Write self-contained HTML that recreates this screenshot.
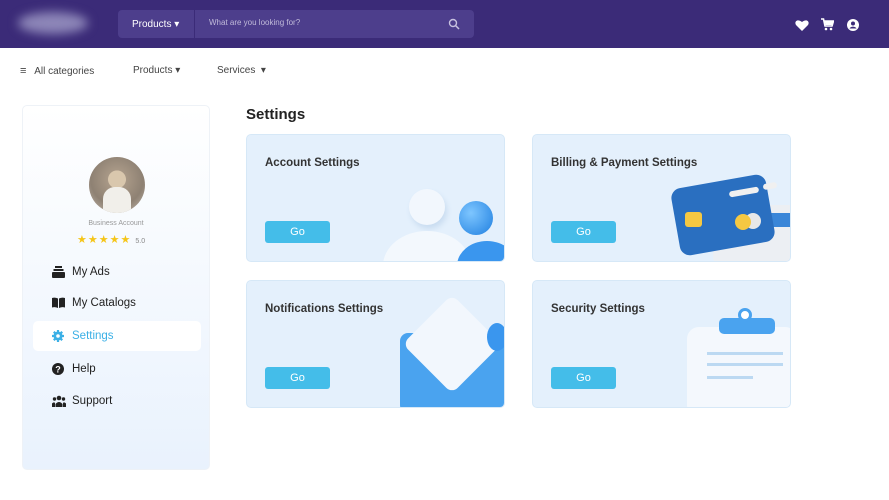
<!DOCTYPE html>
<html><head><style>
*{box-sizing:border-box;margin:0;padding:0}
body{width:889px;height:500px;overflow:hidden;background:#fff;font-family:"Liberation Sans",sans-serif;position:relative;color:#222}
.hdr{position:absolute;left:0;top:0;width:889px;height:48px;background:#3b2b78}
.logo{position:absolute;left:18px;top:12px;width:70px;height:22px;border-radius:50%;background:#8d86b8;filter:blur(5px)}
.search{position:absolute;left:118px;top:10px;width:356px;height:28px;background:#4d3e8c;border-radius:4px}
.search .p{position:absolute;left:14px;top:9px;font-size:10px;color:#fff}
.search .sep{position:absolute;left:76px;top:0;width:1px;height:28px;background:#3b2b78}
.search .q{position:absolute;left:91px;top:8px;font-size:8px;color:#c0bad9}
.nav{position:absolute;top:65px;font-size:10px;color:#444}
.side{position:absolute;left:22px;top:105px;width:188px;height:365px;border:1px solid #eef2f7;border-radius:5px;background:linear-gradient(#fff,#e9f2fd)}
.av{position:absolute;left:66px;top:51px;width:56px;height:56px;border-radius:50%;background:radial-gradient(circle at 50% 40%,#d9c7ad 0 20%,#a89886 21%,#8e8173 60%,#c8beb2 100%);overflow:hidden}
.av:after{content:"";position:absolute;left:14px;top:30px;width:28px;height:26px;border-radius:12px 12px 0 0;background:#f1efea}
.item{position:absolute;left:10px;width:168px;height:30px;font-size:11.5px;color:#222}
.item span{position:absolute;left:39px;top:9px}
.item svg{position:absolute;left:19px;top:9px}
.card{position:absolute;width:259px;height:128px;border:1px solid #d6e8f7;border-radius:5px;background:#e4f0fc;overflow:hidden}
.card h3{position:absolute;left:18px;top:22px;font-size:11.5px;font-weight:bold;color:#333}
.go{position:absolute;left:18px;top:86px;width:65px;height:22px;background:#44bde9;border-radius:3px;color:#fff;font-size:11px;text-align:center;line-height:22px}
</style></head><body>
<div class="hdr">
<div class="logo"></div>
<div class="search"><div class="p">Products ▾</div><div class="sep"></div><div class="q">What are you looking for?</div>
<svg style="position:absolute;left:330px;top:8px" width="12" height="12" viewBox="0 0 12 12"><circle cx="5" cy="5" r="3.5" fill="none" stroke="#c8c2e0" stroke-width="1.4"/><path d="M7.5 7.5L11 11" stroke="#c8c2e0" stroke-width="1.5"/></svg></div>
<svg style="position:absolute;left:795px;top:19px" width="14" height="12" viewBox="0 0 14 12"><path d="M7 12L1 6C-1 3 2-1 7 3C12-1 15 3 13 6Z" fill="#fff"/></svg>
<svg style="position:absolute;left:821px;top:18px" width="13" height="13" viewBox="0 0 13 13"><path d="M0 1H2.5L4 8H11L12.5 3H3" fill="none" stroke="#fff" stroke-width="1.6"/><circle cx="5" cy="11" r="1.3" fill="#fff"/><circle cx="10" cy="11" r="1.3" fill="#fff"/><path d="M3.5 3H12L11 7H4.5Z" fill="#fff"/></svg>
<svg style="position:absolute;left:847px;top:19px" width="12" height="12" viewBox="0 0 12 12"><circle cx="6" cy="6" r="6" fill="#fff"/><circle cx="6" cy="4.5" r="2" fill="#3b2b78"/><path d="M2.5 9.5C4 7 8 7 9.5 9.5" fill="#3b2b78"/></svg>
</div>
<div class="nav" style="left:20px"><span style="font-size:11px">≡</span>&nbsp;&nbsp; All categories</div>
<div class="nav" style="left:133px">Products ▾</div>
<div class="nav" style="left:217px">Services &nbsp;▾</div>
<div class="side">
<div class="av"></div>
<div style="position:absolute;left:0;width:186px;top:114px;text-align:center;font-size:7px;color:#999">Business Account</div>
<div style="position:absolute;left:54px;top:127px;font-size:11px;color:#f5c518;letter-spacing:1px">★★★★★ <span style="color:#888;font-size:7px;letter-spacing:0">5.0</span></div>
<div class="item" style="top:151px"><svg width="13" height="12" viewBox="0 0 13 12"><rect x="3" y="0" width="7" height="2" fill="#222"/><rect x="1.5" y="3" width="10" height="2" fill="#222"/><rect x="0" y="6" width="13" height="6" rx="1" fill="#222"/></svg><span>My Ads</span></div>
<div class="item" style="top:182px"><svg width="13" height="11" viewBox="0 0 13 11"><path d="M0 1Q3 0 6 1.5V11Q3 9.5 0 10.5Z M7 1.5Q10 0 13 1V10.5Q10 9.5 7 11Z" fill="#222"/></svg><span>My Catalogs</span></div>
<div class="item" style="top:215px;background:#fff;border-radius:5px"><svg width="12" height="12" viewBox="0 0 12 12"><circle cx="6" cy="6" r="4.5" fill="#3bb0e6"/><g stroke="#3bb0e6" stroke-width="2.2"><path d="M6 0V12M0 6H12M1.8 1.8L10.2 10.2M10.2 1.8L1.8 10.2"/></g><circle cx="6" cy="6" r="1.8" fill="#fff"/></svg><span style="color:#3bb0e6">Settings</span></div>
<div class="item" style="top:248px"><svg width="12" height="12" viewBox="0 0 12 12"><circle cx="6" cy="6" r="6" fill="#222"/><text x="6" y="9.5" font-size="9" font-weight="bold" fill="#fff" text-anchor="middle" font-family="Liberation Sans">?</text></svg><span>Help</span></div>
<div class="item" style="top:280px"><svg width="14" height="12" viewBox="0 0 14 12"><circle cx="7" cy="3" r="2.3" fill="#222"/><circle cx="2.5" cy="4" r="1.7" fill="#222"/><circle cx="11.5" cy="4" r="1.7" fill="#222"/><path d="M3.5 12V9Q7 5 10.5 9V12Z M0 12V8.5Q2 6.5 3 8V12Z M14 12V8.5Q12 6.5 11 8V12Z" fill="#222"/></svg><span>Support</span></div>
</div>
<div style="position:absolute;left:246px;top:106px;font-size:15px;font-weight:bold;color:#222">Settings</div>
<div class="card" style="left:246px;top:134px"><h3>Account Settings</h3>
<div style="position:absolute;left:162px;top:54px;width:36px;height:36px;border-radius:50%;background:#f2f7fd;box-shadow:2px 4px 6px #c9dcf0"></div>
<div style="position:absolute;left:136px;top:96px;width:88px;height:70px;border-radius:50%;background:#f3f8fd"></div>
<div style="position:absolute;left:212px;top:66px;width:34px;height:34px;border-radius:50%;background:radial-gradient(circle at 35% 35%,#7ec6ff,#1f7fe0)"></div>
<div style="position:absolute;left:210px;top:106px;width:60px;height:50px;border-radius:50%;background:#3a96ee"></div>
<div class="go">Go</div></div>
<div class="card" style="left:532px;top:134px"><h3>Billing &amp; Payment Settings</h3>
<div style="position:absolute;left:180px;top:70px;width:90px;height:60px;background:#eceff3;border-radius:8px"></div>
<div style="position:absolute;left:226px;top:78px;width:40px;height:14px;background:#3a86d8"></div>
<div style="position:absolute;left:142px;top:46px;width:96px;height:68px;background:#2a6fc0;border-radius:10px;transform:rotate(-10deg)"></div>
<div style="position:absolute;left:152px;top:77px;width:17px;height:15px;background:#f5c842;border-radius:3px"></div>
<div style="position:absolute;left:212px;top:78px;width:16px;height:16px;background:#e8e8e8;border-radius:50%"></div>
<div style="position:absolute;left:202px;top:79px;width:16px;height:16px;background:#f5c842;border-radius:50%"></div>
<div style="position:absolute;left:196px;top:54px;width:30px;height:6px;background:#f0f0f0;border-radius:3px;transform:rotate(-10deg)"></div>
<div style="position:absolute;left:230px;top:48px;width:14px;height:6px;background:#f0f0f0;border-radius:3px;transform:rotate(-10deg)"></div>
<div class="go">Go</div></div>
<div class="card" style="left:246px;top:280px"><h3>Notifications Settings</h3>
<div style="position:absolute;left:153px;top:52px;width:110px;height:80px;background:#4aa3ef;border-radius:8px"></div>
<div style="position:absolute;left:170px;top:28px;width:70px;height:70px;background:#f2f7fd;transform:rotate(45deg);border-radius:8px"></div>
<div style="position:absolute;left:240px;top:42px;width:20px;height:28px;border-radius:50%;background:#3a96ee"></div>
<div class="go">Go</div></div>
<div class="card" style="left:532px;top:280px"><h3>Security Settings</h3>
<div style="position:absolute;left:154px;top:46px;width:110px;height:90px;background:#f4f8fd;border-radius:12px"></div>
<div style="position:absolute;left:186px;top:37px;width:56px;height:16px;background:#4aa3ef;border-radius:5px"></div>
<div style="position:absolute;left:205px;top:27px;width:14px;height:14px;border:3px solid #4aa3ef;background:#fff;border-radius:50%"></div>
<div style="position:absolute;left:174px;top:71px;width:76px;height:3px;background:#bcd9f2"></div>
<div style="position:absolute;left:174px;top:82px;width:76px;height:3px;background:#bcd9f2"></div>
<div style="position:absolute;left:174px;top:95px;width:46px;height:3px;background:#bcd9f2"></div>
<div class="go">Go</div></div>
</body></html>
